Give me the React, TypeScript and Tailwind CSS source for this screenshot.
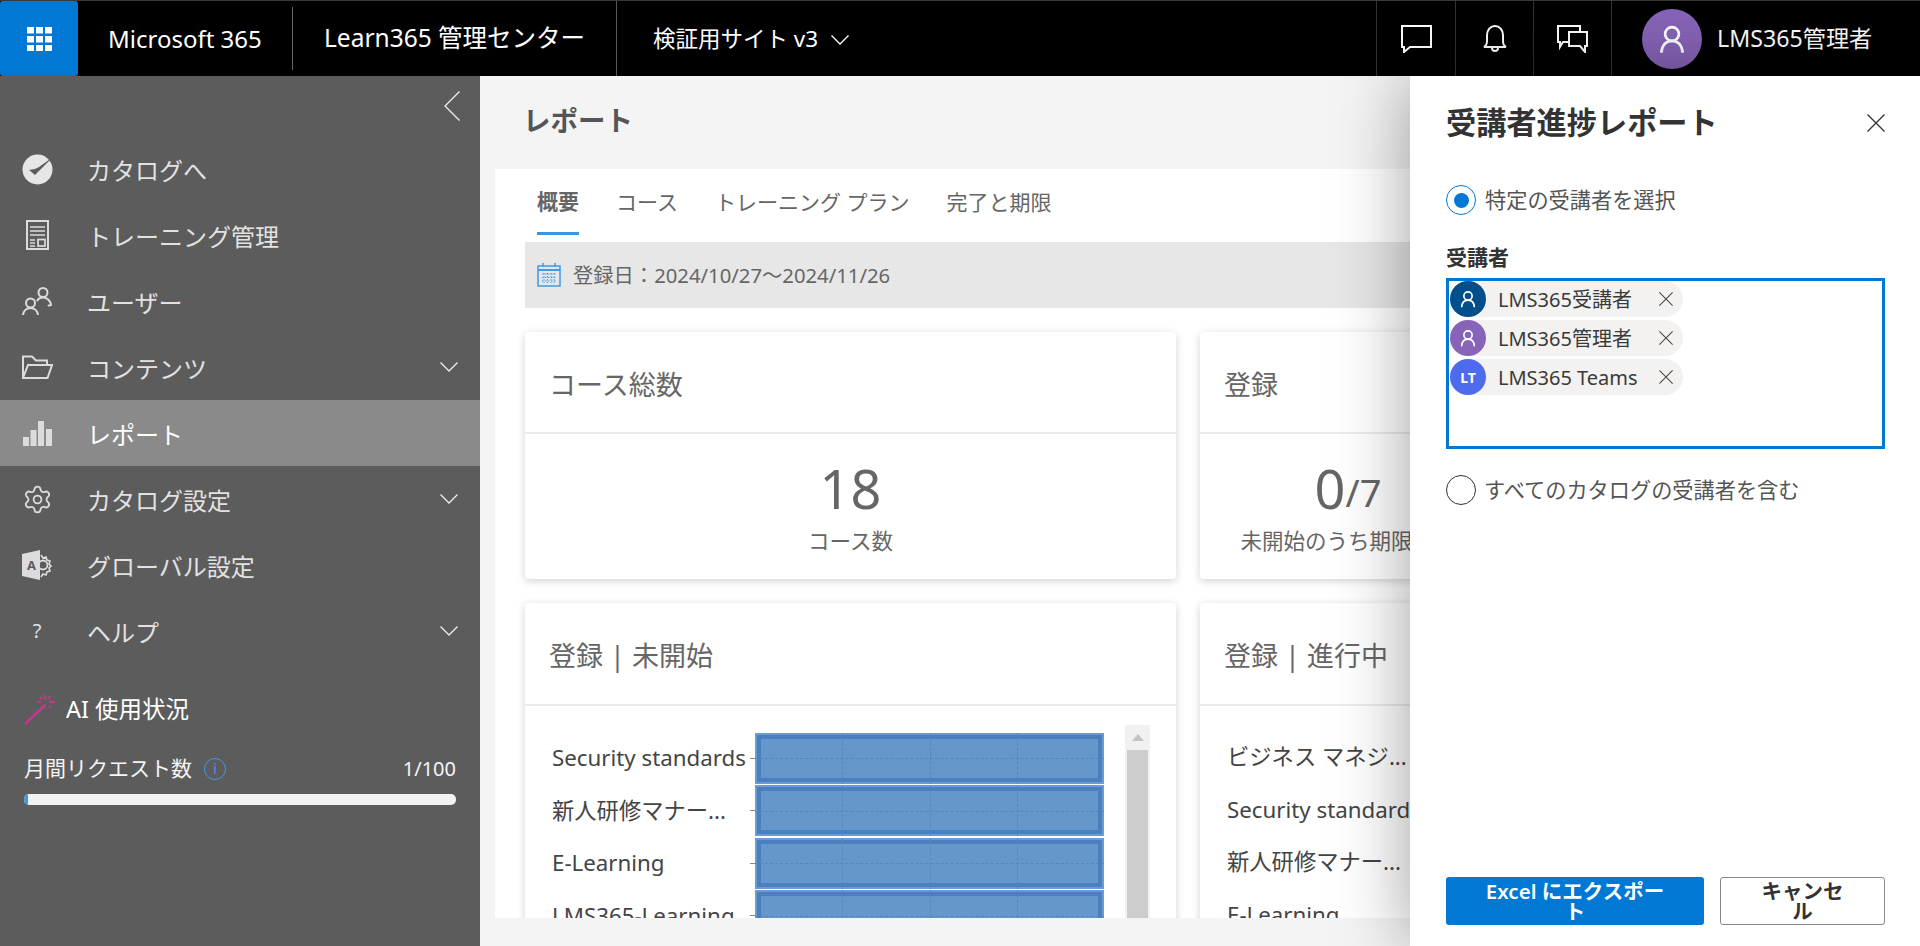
import React from "react";
import { Settings } from "lucide-react";

const Chev = ({ className }: { className?: string }) => (
  <svg viewBox="0 0 18 10" className={className} fill="none" stroke="currentColor" strokeWidth="1.300">
    <path d="M0.500 0.500L9 9L17.500 0.500" />
  </svg>
);

const Cross = ({ className }: { className?: string }) => (
  <svg viewBox="0 0 18 18" className={className} fill="none" stroke="currentColor" strokeWidth="1.300">
    <path d="M0.500 0.500L17.500 17.500M17.500 0.500L0.500 17.500" />
  </svg>
);

const Person = ({ className }: { className?: string }) => (
  <svg viewBox="0 0 24 24" fill="none" stroke="currentColor" strokeWidth="2.200" className={className}>
    <circle cx="12" cy="8" r="5.500" />
    <path d="M3.500 23c.4-6 3.800-9.500 8.500-9.500s8.100 3.500 8.500 9.500" />
  </svg>
);

const Waffle = () => (
  <svg viewBox="0 0 25 24" className="h-[24px] w-[25px]" fill="#fff">
    {[0, 9, 18].map((y) =>
      [0, 9, 18].map((x) => <rect key={`${x}-${y}`} x={x} y={y} width="7" height="6.500" />)
    )}
  </svg>
);

const CheckBlob = () => (
  <svg viewBox="0 0 31 31" className="h-[31px] w-[31px]">
    <ellipse cx="15.500" cy="15.500" rx="15" ry="15" fill="#e6e6e6" />
    <path d="M7 16l6 5L31 3 17 13l-4 2z" fill="#5c5c5c" />
  </svg>
);

const Doc = () => (
  <svg viewBox="0 0 23 30" className="h-[30px] w-[23px]" fill="none" stroke="#dcdcdc" strokeWidth="2">
    <rect x="1" y="1" width="21" height="28" />
    <path d="M4 7h15M4 11h15M4 15h15M4 20h5M4 23h5M4 26h5" strokeWidth="1.700" />
    <rect x="12" y="19.500" width="7" height="6.500" strokeWidth="1.700" />
  </svg>
);

const Users = () => (
  <svg viewBox="0 0 30 30" className="h-[30px] w-[30px]" fill="none" stroke="#dcdcdc" strokeWidth="2">
    <circle cx="21" cy="6.500" r="4.500" />
    <path d="M26 20c1-1 2.500-.5 3-1-.5-4-3.500-7.500-8-7.500-3 0-5 1.500-6 3.500" />
    <circle cx="8.500" cy="17" r="4.500" />
    <path d="M1 29c.5-4 3.500-7 7.500-7s7 3 7.500 7" />
  </svg>
);

const Folder = () => (
  <svg viewBox="0 0 31 24" className="h-[24px] w-[31px]" fill="none" stroke="#dcdcdc" strokeWidth="2">
    <path d="M1 23V1.500h9l4 4h11V10" />
    <path d="M1 23l5-13h24l-4.500 13z" />
  </svg>
);

const Bars = () => (
  <svg viewBox="0 0 29 25" className="h-[25px] w-[29px]" fill="#dcdcdc">
    <rect x="0" y="16" width="6" height="9" />
    <rect x="7.500" y="9" width="6" height="16" />
    <rect x="15" y="0" width="6" height="25" />
    <rect x="23" y="8" width="6" height="17" />
  </svg>
);

const AdminGear = () => (
  <svg viewBox="0 0 30 30" className="h-[30px] w-[30px]">
    <path d="M0 4l18-4v30L0 26z" fill="#dcdcdc" />
    <text x="5" y="20" fontSize="13" fontWeight="700" fill="#5c5c5c" fontFamily="'Noto Sans',sans-serif">A</text>
    <circle cx="21" cy="15" r="4.500" fill="none" stroke="#dcdcdc" strokeWidth="1.800" />
    <path d="M19 5l2 3 3-1 1 3 3 1-1 3 2 2-2 2 1 3-3 1-1 3-3-1-2 3" fill="none" stroke="#dcdcdc" strokeWidth="1.600" />
  </svg>
);

const Wand = () => (
  <svg viewBox="0 0 31 30" className="h-[30px] w-[31px]" fill="none" stroke="#c2388f" strokeWidth="2">
    <path d="M1 29L20 11" strokeWidth="2.500" />
    <path d="M21 0v4M21 9v3M13 7h4M25 7h6M27 1l-3 3M27 13l-2-2M16 2l2 2" />
  </svg>
);

const NavItem = ({
  icon,
  label,
  chevron,
  active,
}: {
  icon: React.ReactNode;
  label: string;
  chevron?: boolean;
  active?: boolean;
}) => (
  <div className={`flex h-[66px] items-center ${active ? "bg-[#8a8a8a] text-white" : "text-[#e2e2e2]"}`}>
    <div className="flex w-[87px] justify-center pr-[13px]">{icon}</div>
    <span className="flex-1 whitespace-nowrap pt-[3px] text-[24px]">{label}</span>
    {chevron && <Chev className="mr-[22px] h-[10px] w-[18px] text-[#eeeeee]" />}
  </div>
);

const Bar = () => (
  <div className="relative h-[51px] w-[349px] bg-[#6b9bd0] p-[2px]">
    <div className="h-full w-full border-[4px] border-[#4a80bf] bg-[#6597cb]" />
    <div className="absolute bottom-0 left-1/4 top-0 border-l border-dashed border-[#5587bd]" />
    <div className="absolute bottom-0 left-1/2 top-0 border-l border-dashed border-[#5587bd]" />
    <div className="absolute bottom-0 left-3/4 top-0 border-l border-dashed border-[#5587bd]" />
    <div className="absolute left-0 right-0 top-1/2 border-t border-dashed border-[#5587bd]" />
  </div>
);

const ChartRow = ({ label, bar }: { label: string; bar?: boolean }) => (
  <div className="flex h-[52.500px] shrink-0 items-center">
    <div className="w-[198px] shrink-0 overflow-visible whitespace-nowrap text-[22.300px] leading-[28px] text-[#444444]">{label}</div>
    <div className="h-px w-[5px] shrink-0 bg-[#888888]" />
    {bar && <Bar />}
  </div>
);

const Card = ({ title, children, header }: { title: string; children: React.ReactNode; header: string }) => (
  <div className="w-[651px] shrink-0 rounded-[4px] bg-white shadow-[0_2px_8px_rgba(0,0,0,0.18)]">
    <div className={`flex ${header} items-center border-b-2 border-[#ebebeb] px-[24px] pt-[6px] text-[27px] text-[#666666]`}>{title}</div>
    {children}
  </div>
);

const Stat = ({ big, small, label }: { big: string; small?: string; label: string }) => (
  <div className="flex w-[296px] shrink-0 flex-col items-center pt-[20px]">
    <div className="flex h-[68px] items-end leading-none text-[#666666]">
      <span className="text-[54px] leading-[68px]">{big}</span>
      {small && <span className="text-[38px] leading-[60px]">{small}</span>}
    </div>
    <div className="mt-[4px] whitespace-nowrap text-[21.500px] leading-[30px] text-[#666666]">{label}</div>
  </div>
);

const Chip = ({ label, bg, children }: { label: string; bg: string; children: React.ReactNode }) => (
  <div className="flex h-[36px] w-[233px] items-center rounded-full bg-[#f3f2f1]">
    <div className={`flex h-[36px] w-[36px] shrink-0 items-center justify-center rounded-full text-white ${bg}`}>{children}</div>
    <span className="ml-[12px] w-[161px] whitespace-nowrap pt-[1px] text-[20px] text-[#3a3a3a]">{label}</span>
    <Cross className="h-[14px] w-[14px] text-[#444444]" />
  </div>
);

export default function App() {
  return (
    <div className="flex h-screen w-full flex-col overflow-hidden bg-[#f4f4f4] font-['Noto_Sans','Noto_Sans_CJK_JP',sans-serif]">
      {/* Top bar */}
      <header className="flex h-[76px] shrink-0 items-center border-t border-[#3a3a3a] bg-black text-white">
        <div className="flex h-full w-[78px] shrink-0 items-center justify-center rounded-[3px] bg-[#0078d4]">
          <Waffle />
        </div>
        <div className="flex h-[63px] w-[215px] shrink-0 items-center whitespace-nowrap border-r border-[#666666] pl-[30px] text-[24px]">Microsoft 365</div>
        <div className="flex h-full w-[324px] shrink-0 items-center whitespace-nowrap border-r border-[#555555] pl-[31px] text-[24.500px]">Learn365 管理センター</div>
        <div className="flex items-center whitespace-nowrap pl-[36px] text-[22.500px]">
          検証用サイト v3
          <Chev className="ml-[13px] mt-[2px] h-[10px] w-[18px]" />
        </div>
        <div className="flex-1" />
        <div className="flex h-full w-[79px] items-center justify-center border-l border-[#333333]">
          <svg viewBox="0 0 31 28" className="h-[28px] w-[31px]" fill="none" stroke="#fff" strokeWidth="2">
            <path d="M1 1h29v21H9l-6 5v-5H1z" />
          </svg>
        </div>
        <div className="flex h-full w-[78px] items-center justify-center border-l border-[#333333]">
          <svg viewBox="0 0 24 27" className="h-[27px] w-[24px]" fill="none" stroke="#fff" strokeWidth="2">
            <path d="M1 22c2-1 3-3 3-6V10c0-5 3.500-9 8-9s8 4 8 9v6c0 3 1 5 3 6z" />
            <path d="M9 23a3 3 0 0 0 6 0" />
          </svg>
        </div>
        <div className="flex h-full w-[78px] items-center justify-center border-l border-[#333333]">
          <svg viewBox="0 0 31 28" className="h-[28px] w-[31px]" fill="none" stroke="#fff" strokeWidth="2">
            <path d="M12 17H6l-3 5v-5H1V1h22v6" />
            <path d="M12 7h18v14h-2v6l-5-6H12z" />
          </svg>
        </div>
        <div className="flex h-full w-[309px] items-center border-l border-[#333333] pl-[30px]">
          <div className="flex h-[60px] w-[60px] items-center justify-center rounded-full bg-[#8764b8]">
            <Person className="h-[30px] w-[30px]" />
          </div>
          <span className="ml-[15px] whitespace-nowrap text-[23.200px]">LMS365管理者</span>
        </div>
      </header>

      <div className="relative flex min-h-0 flex-1">
        {/* Sidebar */}
        <aside className="flex w-[480px] shrink-0 flex-col bg-[#5c5c5c]">
          <div className="flex h-[60px] shrink-0 items-center justify-end pr-[20px]">
            <svg viewBox="0 0 16 30" className="h-[30px] w-[16px] text-[#eeeeee]" fill="none" stroke="currentColor" strokeWidth="1.300">
              <path d="M15.500 0.500L1 15L15.500 29.500" />
            </svg>
          </div>
          <NavItem icon={<CheckBlob />} label="カタログへ" />
          <NavItem icon={<Doc />} label="トレーニング管理" />
          <NavItem icon={<Users />} label="ユーザー" />
          <NavItem icon={<Folder />} label="コンテンツ" chevron />
          <NavItem icon={<Bars />} label="レポート" active />
          <NavItem icon={<Settings className="h-[31px] w-[31px] text-[#dcdcdc]" strokeWidth={1.400} />} label="カタログ設定" chevron />
          <NavItem icon={<AdminGear />} label="グローバル設定" />
          <NavItem icon={<span className="text-[20px] text-[#e2e2e2]">?</span>} label="ヘルプ" chevron />
          <div className="mt-[28px] flex h-[36px] items-center pl-[24px] text-white">
            <Wand />
            <span className="ml-[11px] text-[23.500px]">AI 使用状況</span>
          </div>
          <div className="ml-[24px] mr-[24px] mt-[26px] flex h-[30px] items-center text-[#f5f5f5]">
            <span className="text-[21px]">月間リクエスト数</span>
            <span className="ml-[12px] flex h-[22px] w-[22px] items-center justify-center rounded-full border-[1.500px] border-[#3d9ae4] text-[14px] leading-none text-[#3d9ae4]">i</span>
            <span className="ml-auto text-[20px]">1/100</span>
          </div>
          <div className="ml-[24px] mr-[24px] mt-[10px] h-[11px] overflow-hidden rounded-[5px] bg-[#f3f2f1]">
            <div className="h-full w-[4px] bg-[#3d9ae4]" />
          </div>
        </aside>

        {/* Main */}
        <main className="flex min-w-0 flex-1 flex-col overflow-hidden">
          <div className="flex h-[93px] shrink-0 items-center pb-[3px] pl-[43px] text-[27.500px] font-bold text-[#555555]">レポート</div>
          <section className="ml-[15px] h-[749px] shrink-0 overflow-hidden bg-white px-[30px]">
            <div className="flex h-[66px] items-start gap-[37px] pl-[12px] text-[21px] text-[#666666]">
              <div className="flex h-[66px] items-center border-b-[3px] border-[#3b96e0] pt-[2px] font-bold">概要</div>
              <div className="flex h-[66px] items-center pt-[2px]">コース</div>
              <div className="flex h-[66px] items-center pt-[2px]">トレーニング プラン</div>
              <div className="flex h-[66px] items-center pt-[2px]">完了と期限</div>
            </div>
            <div className="mt-[7px] flex h-[66px] items-center bg-[#e7e7e7] pl-[12px] text-[20.300px] text-[#666666]">
              <svg viewBox="0 0 24 24" className="h-[24px] w-[24px]" fill="none" stroke="#3f9be6" strokeWidth="1.500">
                <rect x="1" y="3" width="22" height="20" />
                <path d="M1 7h22" strokeWidth="2" />
                <path d="M6 0v4M18 0v4" />
                <path d="M5 11h14M5 14.500h14M5 18h14M7 10v10M10.500 10v10M14 10v10M17 10v10" strokeWidth="1" strokeDasharray="1.500 1.500" />
              </svg>
              <span className="ml-[12px] pt-[1px]">登録日：2024/10/27～2024/11/26</span>
            </div>
            <div className="mt-[24px] flex gap-[24px]">
              <Card title="コース総数" header="h-[102px]">
                <div className="flex h-[145px] justify-center">
                  <div className="flex w-full flex-col items-center pt-[20px]">
                    <div className="h-[68px] text-[54px] leading-[68px] text-[#666666]">18</div>
                    <div className="mt-[4px] text-[21.500px] leading-[30px] text-[#666666]">コース数</div>
                  </div>
                </div>
              </Card>
              <Card title="登録" header="h-[102px]">
                <div className="flex h-[145px]">
                  <Stat big="0" small="/7" label="未開始のうち期限切れ" />
                </div>
              </Card>
            </div>
            <div className="mt-[24px] flex gap-[24px]">
              <Card title="登録 | 未開始" header="h-[103px]">
                <div className="flex h-[320px] pl-[27px]">
                  <div className="flex w-[554px] shrink-0 flex-col pt-[26px]">
                    <ChartRow label="Security standards" bar />
                    <ChartRow label="新人研修マナー..." bar />
                    <ChartRow label="E-Learning" bar />
                    <ChartRow label="LMS365-Learning" bar />
                  </div>
                  <div className="ml-[19px] mt-[19px] w-[25px] bg-[#f1f1f1]">
                    <div className="flex h-[25px] items-center justify-center">
                      <div className="h-0 w-0 border-x-[6px] border-b-[7px] border-x-transparent border-b-[#c4c4c4]" />
                    </div>
                    <div className="mx-auto h-[400px] w-[21px] bg-[#cdcdcd]" />
                  </div>
                </div>
              </Card>
              <Card title="登録 | 進行中" header="h-[103px]">
                <div className="h-[320px] pl-[27px] pt-[25px]">
                  <ChartRow label="ビジネス マネジ..." />
                  <ChartRow label="Security standards" />
                  <ChartRow label="新人研修マナー..." />
                  <ChartRow label="E-Learning" />
                </div>
              </Card>
            </div>
          </section>
        </main>

        {/* Side panel */}
        <aside className="absolute bottom-0 right-0 top-0 flex w-[510px] flex-col bg-white pb-[21px] pl-[36px] pr-[35px] text-[#333333] shadow-[0_0_70px_rgba(0,0,0,0.38)]">
          <div className="mt-[27px] flex h-[40px] shrink-0 items-center justify-between">
            <h1 className="whitespace-nowrap text-[30.200px] font-bold">受講者進捗レポート</h1>
            <Cross className="h-[18px] w-[18px] text-[#333333]" />
          </div>
          <div className="mt-[42px] flex h-[30px] shrink-0 items-center">
            <div className="flex h-[30px] w-[30px] items-center justify-center rounded-full border border-[#0078d4]">
              <div className="h-[15px] w-[15px] rounded-full bg-[#0078d4]" />
            </div>
            <span className="ml-[9px] text-[21.200px] text-[#555555]">特定の受講者を選択</span>
          </div>
          <div className="mt-[27px] h-[30px] shrink-0 text-[21px] font-bold leading-[30px]">受講者</div>
          <div className="mt-[6px] h-[171px] shrink-0 border-[3px] border-[#0078d4] px-[1px] py-0">
            <div className="flex flex-col gap-[3px]">
              <Chip label="LMS365受講者" bg="bg-[#004e8c]"><Person className="h-[18px] w-[18px]" /></Chip>
              <Chip label="LMS365管理者" bg="bg-[#8764b8]"><Person className="h-[18px] w-[18px]" /></Chip>
              <Chip label="LMS365 Teams" bg="bg-[#4f6bed]"><span className="text-[14px] font-bold">LT</span></Chip>
            </div>
          </div>
          <div className="mt-[26px] flex h-[30px] shrink-0 items-center">
            <div className="h-[30px] w-[30px] rounded-full border border-[#333333]" />
            <span className="ml-[8px] text-[21.200px] text-[#555555]">すべてのカタログの受講者を含む</span>
          </div>
          <div className="mt-auto flex h-[48px] shrink-0 justify-between">
            <button className="h-[48px] w-[258px] rounded-[3px] bg-[#0078d4] text-[20.500px] font-semibold leading-[20px] text-white">
              Excel にエクスポー<br />ト
            </button>
            <button className="h-[48px] w-[165px] rounded-[3px] border border-[#8a8886] bg-white text-[20.500px] font-semibold leading-[20px] text-[#333333]">
              キャンセ<br />ル
            </button>
          </div>
        </aside>
      </div>
    </div>
  );
}
